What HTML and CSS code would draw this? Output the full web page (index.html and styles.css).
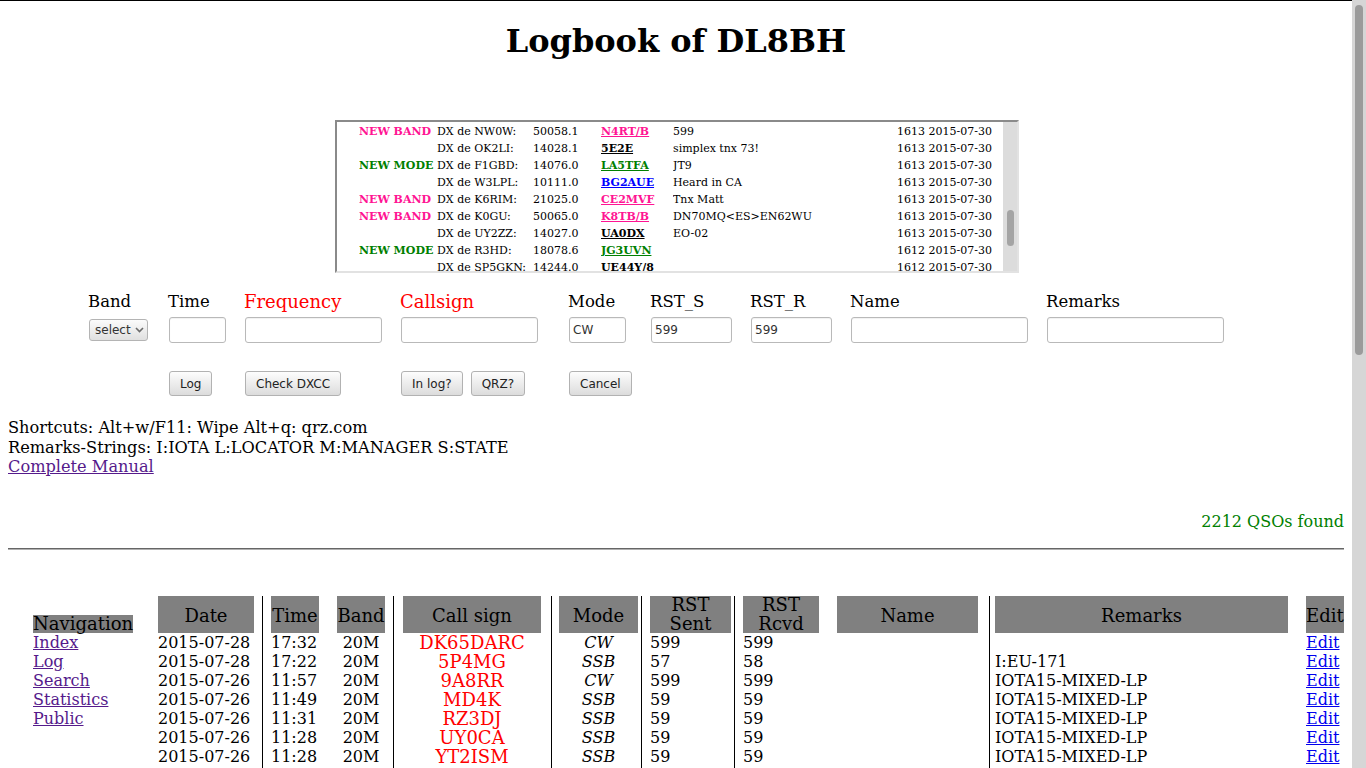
FILE: index.html
```html
<!DOCTYPE html>
<html lang="en">
<head>
<meta charset="utf-8">
<title>Logbook of DL8BH</title>
<link rel="stylesheet" href="styles.css">
</head>
<body>
<div class="window">
  <main class="page">
    <h1 class="title">Logbook of DL8BH</h1>

    <div class="cluster">
      <div class="cluster-view">
        <table class="spots">
          <colgroup><col class="s-tag"><col class="s-dx"><col class="s-freq"><col class="s-call"><col class="s-cmt"><col class="s-time"></colgroup>
          <tr><td class="tag nb">NEW BAND</td><td>DX de NW0W:</td><td>50058.1</td><td><a href="#" class="spot pink">N4RT/B</a></td><td>599</td><td>1613 2015-07-30</td></tr>
          <tr><td></td><td>DX de OK2LI:</td><td>14028.1</td><td><a href="#" class="spot black">5E2E</a></td><td>simplex tnx 73!</td><td>1613 2015-07-30</td></tr>
          <tr><td class="tag nm">NEW MODE</td><td>DX de F1GBD:</td><td>14076.0</td><td><a href="#" class="spot green">LA5TFA</a></td><td>JT9</td><td>1613 2015-07-30</td></tr>
          <tr><td></td><td>DX de W3LPL:</td><td>10111.0</td><td><a href="#" class="spot blue">BG2AUE</a></td><td>Heard in CA</td><td>1613 2015-07-30</td></tr>
          <tr><td class="tag nb">NEW BAND</td><td>DX de K6RIM:</td><td>21025.0</td><td><a href="#" class="spot pink">CE2MVF</a></td><td>Tnx Matt</td><td>1613 2015-07-30</td></tr>
          <tr><td class="tag nb">NEW BAND</td><td>DX de K0GU:</td><td>50065.0</td><td><a href="#" class="spot pink">K8TB/B</a></td><td>DN70MQ&lt;ES&gt;EN62WU</td><td>1613 2015-07-30</td></tr>
          <tr><td></td><td>DX de UY2ZZ:</td><td>14027.0</td><td><a href="#" class="spot black">UA0DX</a></td><td>EO-02</td><td>1613 2015-07-30</td></tr>
          <tr><td class="tag nm">NEW MODE</td><td>DX de R3HD:</td><td>18078.6</td><td><a href="#" class="spot green">JG3UVN</a></td><td></td><td>1612 2015-07-30</td></tr>
          <tr><td></td><td>DX de SP5GKN:</td><td>14244.0</td><td><a href="#" class="spot black">UE44Y/8</a></td><td></td><td>1612 2015-07-30</td></tr>
        </table>
      </div>
      <div class="cluster-scroll"><div class="cluster-thumb"></div></div>
    </div>

    <form class="qso-form" action="#">
      <div class="lbl">Band</div>
      <div class="lbl">Time</div>
      <div class="lbl req">Frequency</div>
      <div class="lbl req">Callsign</div>
      <div class="lbl">Mode</div>
      <div class="lbl">RST_S</div>
      <div class="lbl">RST_R</div>
      <div class="lbl">Name</div>
      <div class="lbl">Remarks</div>

      <div class="ctl select-wrap">
        <select class="band"><option>select</option></select>
        <svg class="chev" width="9" height="6" viewBox="0 0 9 6"><polyline points="1,1 4.5,4.6 8,1" fill="none" stroke="#6b6b6b" stroke-width="1.6"/></svg>
      </div>
      <input class="ctl field w56" type="text">
      <input class="ctl field w136" type="text">
      <input class="ctl field w136" type="text">
      <input class="ctl field w56" type="text" value="CW">
      <input class="ctl field w80" type="text" value="599">
      <input class="ctl field w80" type="text" value="599">
      <input class="ctl field w176" type="text">
      <input class="ctl field w176" type="text">

      <div class="btns first"><button type="button" class="btn">Log</button></div>
      <div class="btns"><button type="button" class="btn">Check DXCC</button></div>
      <div class="btns"><button type="button" class="btn">In log?</button><button type="button" class="btn">QRZ?</button></div>
      <div class="btns"><button type="button" class="btn">Cancel</button></div>
    </form>

    <div class="help">
      <div>Shortcuts: Alt+w/F11: Wipe Alt+q: qrz.com</div>
      <div>Remarks-Strings: I:IOTA L:LOCATOR M:MANAGER S:STATE</div>
      <a href="#" class="visited">Complete Manual</a>
    </div>

    <div class="count">2212 QSOs found</div>
    <hr class="rule">

    <table class="log">
      <colgroup>
        <col class="c-nav"><col class="c-date"><col class="c-time"><col class="c-band"><col class="c-call"><col class="c-mode"><col class="c-rsts"><col class="c-rstr"><col class="c-name"><col class="c-rem"><col class="c-edit">
      </colgroup>
      <thead>
        <tr>
          <th class="nav-head"><span>Navigation</span></th>
          <th>Date</th><th>Time</th><th>Band</th><th>Call sign</th><th>Mode</th><th class="two">RST<br>Sent</th><th class="two">RST<br>Rcvd</th><th>Name</th><th>Remarks</th><th>Edit</th>
        </tr>
      </thead>
      <tbody>
        <tr><td><a href="#" class="visited">Index</a></td><td>2015-07-28</td><td>17:32</td><td>20M</td><td>DK65DARC</td><td>CW</td><td>599</td><td>599</td><td></td><td></td><td><a href="#" class="edit">Edit</a></td></tr>
        <tr><td><a href="#" class="visited">Log</a></td><td>2015-07-28</td><td>17:22</td><td>20M</td><td>5P4MG</td><td>SSB</td><td>57</td><td>58</td><td></td><td>I:EU-171</td><td><a href="#" class="edit">Edit</a></td></tr>
        <tr><td><a href="#" class="visited">Search</a></td><td>2015-07-26</td><td>11:57</td><td>20M</td><td>9A8RR</td><td>CW</td><td>599</td><td>599</td><td></td><td>IOTA15-MIXED-LP</td><td><a href="#" class="edit">Edit</a></td></tr>
        <tr><td><a href="#" class="visited">Statistics</a></td><td>2015-07-26</td><td>11:49</td><td>20M</td><td>MD4K</td><td>SSB</td><td>59</td><td>59</td><td></td><td>IOTA15-MIXED-LP</td><td><a href="#" class="edit">Edit</a></td></tr>
        <tr><td><a href="#" class="visited">Public</a></td><td>2015-07-26</td><td>11:31</td><td>20M</td><td>RZ3DJ</td><td>SSB</td><td>59</td><td>59</td><td></td><td>IOTA15-MIXED-LP</td><td><a href="#" class="edit">Edit</a></td></tr>
        <tr><td></td><td>2015-07-26</td><td>11:28</td><td>20M</td><td>UY0CA</td><td>SSB</td><td>59</td><td>59</td><td></td><td>IOTA15-MIXED-LP</td><td><a href="#" class="edit">Edit</a></td></tr>
        <tr><td></td><td>2015-07-26</td><td>11:28</td><td>20M</td><td>YT2ISM</td><td>SSB</td><td>59</td><td>59</td><td></td><td>IOTA15-MIXED-LP</td><td><a href="#" class="edit">Edit</a></td></tr>
        <tr class="filler"><td></td><td></td><td></td><td></td><td></td><td></td><td></td><td></td><td></td><td></td><td></td></tr>
      </tbody>
    </table>
  </main>
  <div class="scrollbar"><div class="thumb"></div></div>
</div>
</body>
</html>
```
FILE: styles.css
```css
html, body {
  margin: 0;
  padding: 0;
  background: #fff;
  overflow: hidden;
}
body {
  font-family: "DejaVu Serif", serif;
  font-size: 16px;
  color: #000;
}
.window {
  display: flex;
  height: 768px;
  overflow: hidden;
}
.page {
  flex: none;
  width: 1336px;
  padding: 0 8px;
  border-top: 1px solid #000;
}
.scrollbar {
  flex: none;
  width: 14px;
  background: #d6d6d6;
  display: flex;
  justify-content: center;
}
.thumb {
  width: 8px;
  height: 350px;
  margin-top: 5px;
  background: #9b9b9b;
  border-radius: 4px;
}

/* title */
.title {
  margin: 21px 0 0;
  font-size: 32px;
  line-height: 38px;
  font-weight: bold;
  text-align: center;
}

/* dx cluster frame */
.cluster {
  display: flex;
  width: 680px;
  height: 149px;
  margin: 60px 0 0 327px;
  border-style: solid;
  border-width: 2px;
  border-color: #8a8a8a #e2e2e2 #e2e2e2 #8a8a8a;
  overflow: hidden;
}
.cluster-view {
  flex: 1;
  overflow: hidden;
}
.cluster-scroll {
  flex: none;
  width: 14px;
  background: #dcdcdc;
  display: flex;
  justify-content: center;
}
.cluster-thumb {
  width: 7px;
  height: 36px;
  margin-top: 88px;
  background: #a4a4a4;
  border-radius: 4px;
}
.spots {
  border-collapse: collapse;
  table-layout: fixed;
  width: 640px;
  margin: 1px 0 0 22px;
  font-size: 11px;
}
.spots td {
  padding: 0;
  line-height: 17px;
  height: 17px;
  white-space: nowrap;
  overflow: hidden;
}
.s-tag { width: 78px; }
.s-dx { width: 96px; }
.s-freq { width: 68px; }
.s-call { width: 72px; }
.s-cmt { width: 224px; }
.s-time { width: 102px; }
.tag { font-weight: bold; }
.nb { color: #ff1493; }
.nm { color: #008000; }
.spot { font-weight: bold; text-decoration: underline; }
.spot.pink { color: #ff1493; }
.spot.black { color: #000; }
.spot.green { color: #008000; }
.spot.blue { color: #0000ff; }

/* entry form */
.qso-form {
  display: grid;
  grid-template-columns: 80px 76px 156px 168px 82px 100px 100px 196px 177px;
  margin: 18px 0 0 80px;
}
.lbl {
  font-size: 16.5px;
  line-height: 22px;
  height: 22px;
  white-space: nowrap;
}
.lbl.req {
  color: #ff0000;
  font-size: 18px;
}
.ctl {
  margin: 4px 0 0 1px;
  align-self: center;
}
.field {
  box-sizing: border-box;
  height: 26px;
  padding: 0 3px;
  border: 1px solid #b9b9b9;
  border-radius: 3px;
  background: #fff;
  box-shadow: inset 0 1px 1px rgba(0, 0, 0, 0.06);
  font: 12px "DejaVu Sans", sans-serif;
  color: #333;
  outline: none;
}
.w56 { width: 57px; }
.w80 { width: 81px; }
.w136 { width: 137px; }
.w176 { width: 177px; }
.select-wrap {
  position: relative;
  width: 59px;
  height: 22px;
}
.band {
  -webkit-appearance: none;
  appearance: none;
  box-sizing: border-box;
  width: 59px;
  height: 22px;
  margin: 0;
  padding: 0 0 0 5px;
  border: 1px solid #b4b4b4;
  border-radius: 3px;
  background: linear-gradient(#fbfbfb, #e0e0e0);
  font: 12px "DejaVu Sans", sans-serif;
  color: #333;
}
.chev {
  position: absolute;
  left: 46px;
  top: 8px;
}
.btns {
  display: flex;
  gap: 8px;
  margin: 28px 0 0 1px;
}
.btns.first {
  grid-column-start: 2;
}
.btn {
  box-sizing: border-box;
  height: 25px;
  margin: 0;
  padding: 0 10px;
  border: 1px solid #b2b2b2;
  border-radius: 3px;
  background: linear-gradient(#fdfdfd, #dcdcdc);
  font: 12px "DejaVu Sans", sans-serif;
  color: #222;
}

/* help */
.help {
  margin-top: 22px;
  font-size: 16.2px;
  line-height: 19.5px;
}
a.visited { color: #551a8b; }
a.edit { color: #0000ee; }

.count {
  margin-top: 35px;
  line-height: 19.5px;
  text-align: right;
  color: #008000;
}
.rule {
  height: 0;
  margin: 17px 0 0;
  border: 0;
  border-top: 1px solid #666;
  border-bottom: 1px solid #b0b0b0;
}

/* log table */
.log {
  width: 1311px;
  margin: 46px 0 0 25px;
  border-collapse: separate;
  border-spacing: 0;
  table-layout: fixed;
}
.c-nav { width: 125px; }
.c-date { width: 104px; }
.c-time { width: 75px; }
.c-band { width: 56px; }
.c-call { width: 158px; }
.c-mode { width: 90px; }
.c-rsts { width: 93px; }
.c-rstr { width: 103px; }
.c-name { width: 152px; }
.c-rem { width: 317px; }
.c-edit { width: 38px; }
.log th {
  height: 35px;
  padding-top: 2px;
  padding-bottom: 0;
  font-size: 18px;
  line-height: 17.5px;
  font-weight: normal;
  background-image: linear-gradient(#808080, #808080);
  background-repeat: no-repeat;
  background-origin: content-box;
  background-clip: border-box;
  background-size: 100% calc(100% + 2px);
  background-position: 0 -2px;
  text-align: center;
  vertical-align: middle;
  white-space: nowrap;
}
.log th.two {
  padding-top: 0;
  line-height: 18.5px;
  background-size: 100% 100%;
  background-position: 0 0;
}
.log th.nav-head {
  background: none;
  vertical-align: bottom;
  text-align: left;
}
.nav-head span {
  display: inline-block;
  line-height: 18px;
  background: #808080;
}
.log td {
  padding-top: 0;
  padding-bottom: 0;
  height: 19px;
  line-height: 19px;
  font-size: 16px;
  white-space: nowrap;
  vertical-align: middle;
}
.log tr.filler td { height: 10px; }
.log tr > * { padding-left: 0; padding-right: 0; }
.log tr > :nth-child(1) { padding-right: 25px; }
.log tr > :nth-child(2) { padding-right: 8px; }
.log tr > :nth-child(3) { padding-left: 8px; padding-right: 18px; border-left: 1px solid #000; }
.log tr > :nth-child(4) { padding-right: 8px; text-align: center; }
.log tr > :nth-child(5) { padding-left: 9px; padding-right: 10px; border-left: 1px solid #000; text-align: center; }
.log tr > :nth-child(6) { padding-left: 7px; padding-right: 3px; border-left: 1px solid #000; text-align: center; }
.log tr > :nth-child(7) { padding-left: 8px; padding-right: 3px; border-left: 1px solid #000; }
.log tr > :nth-child(8) { padding-left: 8px; padding-right: 18px; border-left: 1px solid #000; }
.log tr > :nth-child(9) { padding-right: 11px; }
.log tr > :nth-child(10) { padding-left: 5px; padding-right: 18px; border-left: 1px solid #000; }
.log td:nth-child(5) { color: #ff0000; font-size: 18px; }
.log td:nth-child(6) { font-style: italic; }
.log th:nth-child(11) { text-align: left; }
```
